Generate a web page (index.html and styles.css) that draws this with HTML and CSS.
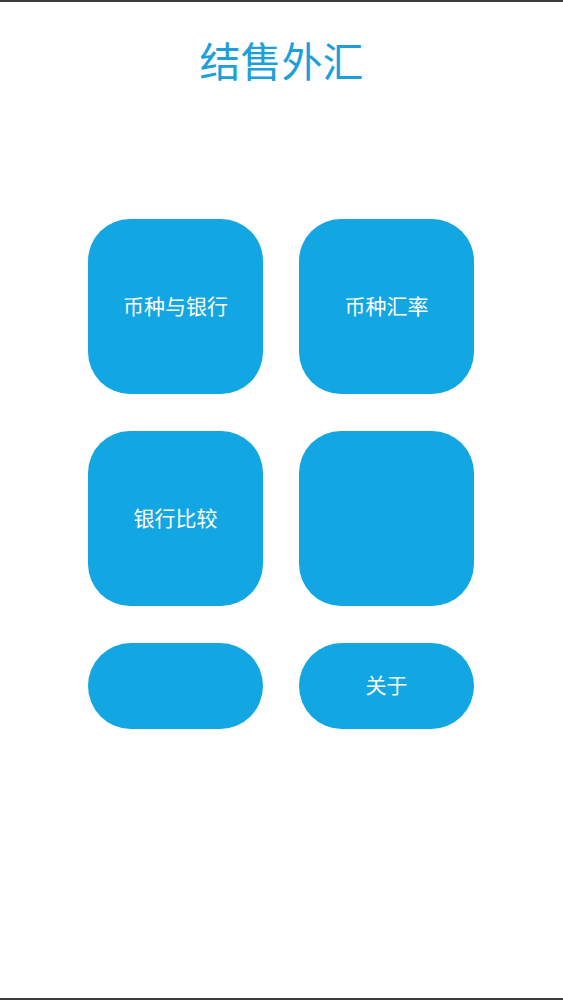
FILE: index.html
```html
<!DOCTYPE html>
<html lang="zh">
<head>
<meta charset="utf-8">
<title>结售外汇</title>
<link rel="stylesheet" href="styles.css">
</head>
<body>
<div class="screen">
  <h1 class="title">结售外汇</h1>
  <div class="grid">
    <div class="tile">币种与银行</div>
    <div class="tile">币种汇率</div>
    <div class="tile">银行比较</div>
    <div class="tile"></div>
    <div class="tile pill"></div>
    <div class="tile pill">关于</div>
  </div>
</div>
</body>
</html>
```

FILE: styles.css
```css
html, body {
  margin: 0;
  padding: 0;
  background: #ffffff;
}
.screen {
  box-sizing: border-box;
  width: 563px;
  height: 1000px;
  border-top: 2px solid #3a3a3a;
  border-bottom: 2px solid #3a3a3a;
  font-family: "Noto Sans CJK SC", "Noto Sans", sans-serif;
  display: flex;
  flex-direction: column;
  align-items: center;
}
.title {
  margin: 27px 0 0 0;
  font-size: 41px;
  line-height: 60px;
  font-weight: 400;
  color: #1d9fd9;
}
.grid {
  margin-top: 130px;
  margin-right: 1px;
  display: grid;
  grid-template-columns: 175px 175px;
  grid-auto-rows: 175px;
  column-gap: 36px;
  row-gap: 37px;
}
.tile {
  box-sizing: border-box;
  padding-bottom: 4px;
  background: #12a6e2;
  border-radius: 42px;
  color: #ffffff;
  font-size: 21px;
  display: flex;
  align-items: center;
  justify-content: center;
}
.pill {
  height: 86px;
  border-radius: 43px;
}
```
